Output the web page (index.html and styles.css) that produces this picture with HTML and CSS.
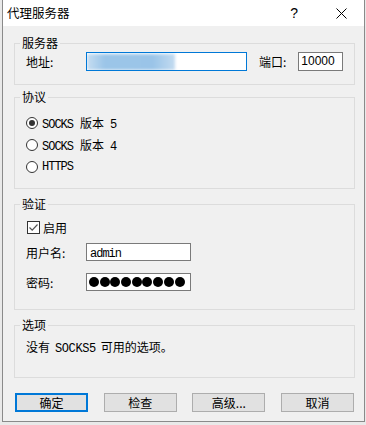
FILE: index.html
```html
<!DOCTYPE html>
<html lang="zh-CN">
<head>
  <meta charset="utf-8">
  <title>代理服务器</title>
  <link rel="stylesheet" href="styles.css">
</head>
<body>
  <div id="window">
    <div id="titlebar">
      <span class="title">代理服务器</span>
      <span class="help">?</span>
      <span class="close">
        <svg width="11" height="11" viewBox="0 0 11 11"><path d="M0.5 0.5 L10.5 10.5 M10.5 0.5 L0.5 10.5" stroke="#000" stroke-width="1" fill="none"/></svg>
      </span>
    </div>

    <div id="content">
      <fieldset class="group server">
        <legend>服务器</legend>
        <div class="row">
          <span class="label">地址:</span>
          <div class="field address active"><span class="blur"></span></div>
          <span class="label port-label">端口:</span>
          <div class="field port">10000</div>
        </div>
      </fieldset>

      <fieldset class="group protocol">
        <legend>协议</legend>
        <div class="option"><span class="radio checked"></span><span><span class="mono">SOCKS</span><span class="cjk">版本</span><span class="mono">5</span></span></div>
        <div class="option"><span class="radio"></span><span><span class="mono">SOCKS</span><span class="cjk">版本</span><span class="mono">4</span></span></div>
        <div class="option"><span class="radio"></span><span class="mono">HTTPS</span></div>
      </fieldset>

      <fieldset class="group auth">
        <legend>验证</legend>
        <div class="option">
          <span class="checkbox">
            <svg width="11" height="11" viewBox="0 0 11 11"><path d="M1.5 5.5 L4.2 8.2 L9.5 2.5" stroke="#555" stroke-width="1.2" fill="none"/></svg>
          </span>
          <span>启用</span>
        </div>
        <div class="row user">
          <span class="label">用户名:</span>
          <div class="field small"><span class="mono">admin</span></div>
        </div>
        <div class="row pass">
          <span class="label">密码:</span>
          <div class="field small dots">
            <i></i><i></i><i></i><i></i><i></i><i></i><i></i><i></i><i></i>
          </div>
        </div>
      </fieldset>

      <fieldset class="group options">
        <legend>选项</legend>
        <p class="note">没有<span class="mono">SOCKS5</span>可用的选项。</p>
      </fieldset>

      <div id="buttons">
        <button class="btn default">确定</button>
        <button class="btn">检查</button>
        <button class="btn">高级...</button>
        <button class="btn">取消</button>
      </div>
    </div>
  </div>
</body>
</html>
```

FILE: styles.css
```css
body {
  margin: 0;
  background-color: #e9e9e9;
  font-family: "Noto Sans CJK SC", "Liberation Sans", sans-serif;
  font-size: 12px;
  color: #000;
}

#window {
  margin-left: 2px;
  width: 361px;
  height: 421px;
  border: 1px solid #8a8a8a;
  border-top: none;
  background-color: #f0f0f0;
}

#titlebar {
  height: 26px;
  background-color: #fff;
  display: flex;
  align-items: center;
}

#titlebar .title {
  margin-left: 4px;
  font-size: 12.5px;
  line-height: 16px;
}

#titlebar .help {
  margin-left: auto;
  font-family: "Liberation Sans", sans-serif;
  font-size: 14px;
  line-height: 16px;
}

#titlebar .close {
  display: flex;
  margin-left: 38px;
  margin-right: 17px;
}

#content {
  padding-top: 9px;
}

.group {
  margin: 0 9px 0 11px;
  padding: 0 10px 0 11px;
  border: 1px solid #dcdcdc;
}

.group legend {
  margin-left: -6px;
  padding: 0 2px;
  line-height: 16px;
}

.mono {
  font-family: "Liberation Mono", monospace;
  font-size: 12px;
  letter-spacing: -1px;
}

.cjk {
  margin: 0 6px 0 7px;
}

.row {
  display: flex;
  align-items: center;
}

.label {
  width: 60px;
}

.field {
  box-sizing: border-box;
  height: 19px;
  border: 1px solid #7a7a7a;
  background-color: #fff;
  padding: 0 3px;
  line-height: 17px;
}

.field.active {
  border-color: #0078d7;
}

/* server */
.server {
  padding-top: 1px;
  padding-bottom: 13px;
}

.address {
  width: 161px;
  padding: 0;
  position: relative;
  overflow: hidden;
}

.blur {
  position: absolute;
  left: 0;
  top: 1px;
  width: 88px;
  height: 16px;
  background: linear-gradient(90deg, #c6ddf1 0%, #9bc5e8 20%, #9ac4e8 75%, #c3dbf0 100%);
  filter: blur(1.5px);
}

.port-label {
  width: auto;
  margin-left: 12px;
  margin-right: 12px;
}

.port {
  width: 45px;
  font-family: "Liberation Sans", sans-serif;
  padding-left: 2px;
}

/* protocol */
.protocol {
  margin-top: 4px;
  padding-top: 7px;
  padding-bottom: 10px;
}

.option {
  display: flex;
  align-items: center;
  height: 22px;
}

.radio {
  box-sizing: border-box;
  width: 12px;
  height: 12px;
  margin-right: 4px;
  border: 1px solid #333;
  border-radius: 50%;
  background-color: #fff;
  position: relative;
}

.radio.checked::after {
  content: "";
  position: absolute;
  left: 2px;
  top: 2px;
  width: 6px;
  height: 6px;
  border-radius: 50%;
  background-color: #333;
}

/* auth */
.auth {
  margin-top: 7px;
  padding-top: 4px;
  padding-bottom: 18px;
}

.checkbox {
  box-sizing: border-box;
  display: flex;
  align-items: center;
  justify-content: center;
  width: 13px;
  height: 13px;
  margin-left: 1px;
  margin-right: 3px;
  border: 1px solid #333;
  background-color: #fff;
}

.user {
  margin-top: 5px;
}

.pass {
  margin-top: 12px;
}

.field.small {
  width: 105px;
  height: 18px;
  line-height: 16px;
}

.dots {
  display: flex;
  align-items: center;
  gap: 0.7px;
  padding-left: 2px;
}

.dots i {
  flex: none;
  width: 10px;
  height: 10px;
  border-radius: 50%;
  background-color: #000;
}

/* options */
.options {
  margin-top: 7px;
  padding-top: 6px;
  padding-bottom: 20px;
}

.note {
  margin: 0;
  line-height: 16px;
}

.note .mono {
  margin: 0 5px;
  letter-spacing: -0.4px;
}

#buttons {
  display: flex;
  justify-content: space-between;
  margin: 15px 10px 0 12px;
}

.btn {
  box-sizing: border-box;
  width: 73px;
  height: 19px;
  padding: 0;
  border: 1px solid #adadad;
  background-color: #e1e1e1;
  font-family: "Noto Sans CJK SC", sans-serif;
  font-size: 12px;
  line-height: 16px;
  color: #000;
}

.btn.default {
  border: 2px solid #0078d7;
}
```
